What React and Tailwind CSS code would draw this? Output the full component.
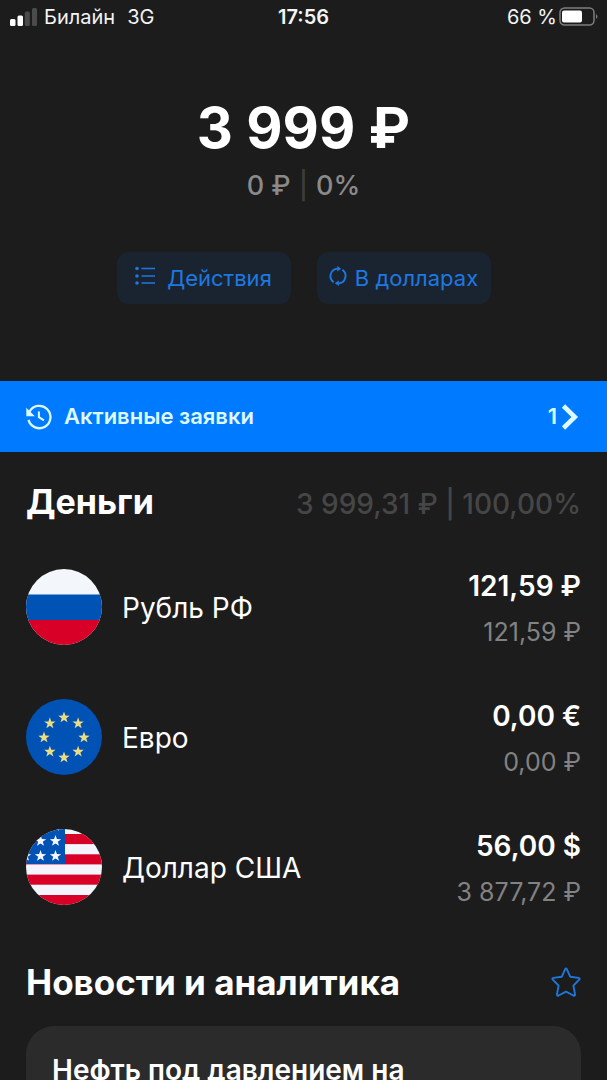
import React from "react";

const accounts = [
  { id: "rub", name: "Рубль РФ", amount: "121,59 ₽", converted: "121,59 ₽" },
  { id: "eur", name: "Евро", amount: "0,00 €", converted: "0,00 ₽" },
  { id: "usd", name: "Доллар США", amount: "56,00 $", converted: "3 877,72 ₽" },
];

const starPoints = (cx, cy, r) => {
  const points = [];
  for (let i = 0; i < 10; i++) {
    const radius = i % 2 === 0 ? r : r * 0.4;
    const angle = (Math.PI / 5) * i - Math.PI / 2;
    points.push(
      `${(cx + radius * Math.cos(angle)).toFixed(2)},${(cy + radius * Math.sin(angle)).toFixed(2)}`
    );
  }
  return points.join(" ");
};

const Flag = ({ id }) => (
  <svg viewBox="0 0 76 76" className="size-19 shrink-0 rounded-full" aria-hidden="true">
    {id === "rub" && (
      <>
        <rect width="76" height="76" fill="#f3f7fb" />
        <rect y="25.5" width="76" height="26" fill="#0052b4" />
        <rect y="51" width="76" height="25" fill="#d80027" />
      </>
    )}
    {id === "eur" && (
      <>
        <rect width="76" height="76" fill="#0052b4" />
        {[0, 1, 2, 3, 4, 5, 6, 7].map((n) => (
          <polygon
            key={n}
            points={starPoints(
              38 + 20 * Math.sin((Math.PI / 4) * n),
              38.5 - 20 * Math.cos((Math.PI / 4) * n),
              6
            )}
            fill="#ecdc82"
          />
        ))}
      </>
    )}
    {id === "usd" && (
      <>
        <rect width="76" height="76" fill="#f3f5fc" />
        {[5, 25.3, 45.6, 66].map((y) => (
          <rect key={y} y={y} width="76" height="10.1" fill="#d80027" />
        ))}
        <rect width="39" height="35" fill="#0052b4" />
        {[[14.5, 12], [29.5, 12], [-0.5, 27], [14.5, 27], [29.5, 27], [29.5, -3]].map(
          ([x, y]) => (
            <polygon key={`${x} ${y}`} points={starPoints(x, y, 6)} fill="#f3f5fc" />
          )
        )}
      </>
    )}
  </svg>
);

const SignalIcon = () => (
  <svg viewBox="0 0 28 18" className="w-7 h-5" aria-hidden="true">
    <rect x="0" y="11" width="5.5" height="7" rx="1.5" fill="#fff" />
    <rect x="7.5" y="7.5" width="5.5" height="10.5" rx="1.5" fill="#fff" />
    <rect x="14.8" y="3.5" width="5" height="14.5" rx="1.5" fill="#4b4b4b" />
    <rect x="22" y="0" width="5" height="18" rx="1.5" fill="#4b4b4b" />
  </svg>
);

const BatteryIcon = () => (
  <svg viewBox="0 0 40 20" className="w-10 h-5" aria-hidden="true">
    <rect x="1" y="1" width="34" height="17" rx="4.5" fill="none" stroke="#7d7d7d" strokeWidth="1.5" />
    <rect x="3" y="3.5" width="20" height="12" rx="2" fill="#fff" />
    <path d="M37 7.2c1.8.6 1.8 4 0 4.6z" fill="#7d7d7d" />
  </svg>
);

const ListIcon = () => (
  <svg viewBox="0 0 20 20" className="size-5 mb-1" aria-hidden="true">
    <g fill="currentColor">
      <circle cx="2" cy="2.5" r="1.8" />
      <circle cx="2" cy="10" r="1.8" />
      <circle cx="2" cy="17" r="1.8" />
    </g>
    <path d="M6.5 2.5H20M6.5 10H20M6.5 17H20" stroke="currentColor" strokeWidth="1.7" />
  </svg>
);

const SwapIcon = () => (
  <svg viewBox="0 0 18 20" className="w-4.5 h-5 mb-1" fill="none" aria-hidden="true">
    <path
      d="M4.6 16.3A7.6 7.6 0 0 1 8.5 2.6M13.4 3.7A7.6 7.6 0 0 1 9.5 17.4"
      stroke="currentColor"
      strokeWidth="1.9"
    />
    <path d="M8.2 0 12.2 2.7 8.2 5.6zM9.8 14.4 5.8 17.3 9.8 20z" fill="currentColor" />
  </svg>
);

const HistoryIcon = () => (
  <svg viewBox="0 0 27 27" className="size-6.5" fill="none" aria-hidden="true">
    <path d="M3.6 8A11.6 11.6 0 1 1 2.6 16.5" stroke="currentColor" strokeWidth="2.4" />
    <path d="M.3 3.8V12.6H9.2z" fill="currentColor" />
    <path d="M13.4 7.8V13.6L18.6 17" stroke="currentColor" strokeWidth="2.1" />
  </svg>
);

const ChevronIcon = () => (
  <svg viewBox="0 0 18 26" className="w-4.5 h-6.5" fill="none" aria-hidden="true">
    <path d="M2.5 2 13.8 13 2.5 24" stroke="currentColor" strokeWidth="4.6" />
  </svg>
);

const StarIcon = () => (
  <svg viewBox="0 0 30 30" className="size-7.5" fill="none" aria-hidden="true">
    <path
      d="M14.2 2.2Q15 .8 15.8 2.2L19.3 9.8 27.6 10.9Q29.4 11.3 28.2 12.6L22.4 18.6 24 27.2Q24.1 29.2 22.4 28.5L15 24.6 7.6 28.5Q5.9 29.2 6 27.2L7.6 18.6 1.8 12.6Q.6 11.3 2.4 10.9L10.7 9.8z"
      stroke="currentColor"
      strokeWidth="1.9"
      strokeLinejoin="round"
    />
  </svg>
);

const StatusBar = () => (
  <div className="grid grid-cols-3 items-center h-8 pt-0.5 px-2 text-xl text-gray-100">
    <div className="flex items-center gap-1.5 pl-0.5">
      <SignalIcon />
      <span>Билайн</span>
      <span className="ml-1.5">3G</span>
    </div>
    <span className="text-center font-semibold">17:56</span>
    <div className="flex items-center justify-end gap-0.5">
      <span>66 %</span>
      <BatteryIcon />
    </div>
  </div>
);

const App = () => {
  return (
    <div className="min-h-screen bg-[#1c1c1c] font-['Inter','Liberation_Sans',sans-serif] text-white">
      <StatusBar />

      <header className="flex flex-col items-center pt-16 pb-[77px]">
        <h1 className="text-[56px] leading-16 font-bold">3 999 ₽</h1>
        <p className="flex gap-2 mt-2 text-[27px] leading-9 font-medium text-[#8a8a8a]">
          <span>0 ₽</span>
          <span className="text-[#3c3c3c]">|</span>
          <span>0%</span>
        </p>
        <div className="flex gap-6.5 mt-12 text-[22px] text-[#1e78e0]">
          <button type="button" className="flex items-center justify-center gap-3 w-43.5 h-13 rounded-xl bg-[#1a2430]">
            <ListIcon />
            Действия
          </button>
          <button type="button" className="flex items-center justify-center gap-2 w-43.5 h-13 rounded-xl bg-[#1a2430]">
            <SwapIcon />
            В долларах
          </button>
        </div>
      </header>

      <a
        href="#orders"
        className="flex items-center h-[71px] pl-6.5 pr-7 bg-[#007aff] text-[22px] font-semibold text-[#dcfaff]"
      >
        <HistoryIcon />
        <span className="ml-3">Активные заявки</span>
        <span className="ml-auto mr-1">1</span>
        <ChevronIcon />
      </a>

      <section className="px-6.5">
        <div className="flex items-baseline justify-between pt-7">
          <h2 className="text-[34px] leading-11 font-bold">Деньги</h2>
          <p className="text-[28px] leading-11 font-medium text-[#464646]">
            3 999,31 ₽ | 100,00%
          </p>
        </div>
        <ul className="pt-4">
          {accounts.map((account) => (
            <li key={account.id} className="flex items-center h-32.5">
              <Flag id={account.id} />
              <span className="ml-5 pt-0.5 text-[28px]">{account.name}</span>
              <div className="ml-auto pt-1 text-right">
                <p className="text-[28px] leading-11.5 font-semibold">{account.amount}</p>
                <p className="text-[25px] leading-11.5 text-[#828282]">{account.converted}</p>
              </div>
            </li>
          ))}
        </ul>
      </section>

      <section className="px-6.5">
        <div className="flex items-center justify-between pt-7">
          <h2 className="text-[35px] leading-11 font-bold">Новости и аналитика</h2>
          <button type="button" aria-label="Избранное" className="text-[#1e78dc]">
            <StarIcon />
          </button>
        </div>
        <article className="mt-5.5 px-6.5 pt-6 rounded-t-[28px] bg-[#2b2b2b]">
          <h3 className="text-[28px] leading-10 font-semibold">Нефть под давлением на</h3>
        </article>
      </section>
    </div>
  );
};

export default App;
